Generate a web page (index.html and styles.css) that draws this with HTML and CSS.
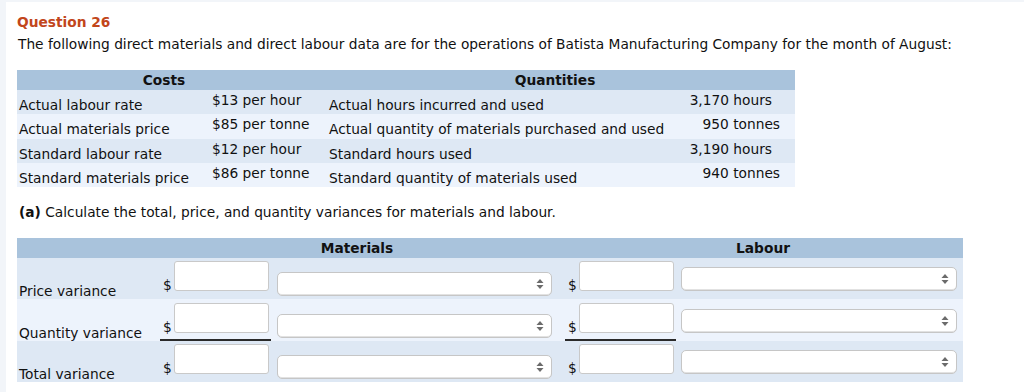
FILE: index.html
```html
<!DOCTYPE html>
<html>
<head>
<meta charset="utf-8">
<link rel="stylesheet" href="styles.css">
</head>
<body>
<div class="panel">
  <h2 class="qtitle">Question 26</h2>
  <p class="intro">The following direct materials and direct labour data are for the operations of Batista Manufacturing Company for the month of August:</p>

  <table class="data">
    <colgroup><col class="c1"><col class="c2"><col class="c3"><col class="c4"></colgroup>
    <tr class="hd"><th colspan="2" class="hcost">Costs</th><th colspan="2" class="hqty">Quantities</th></tr>
    <tr class="dk"><td class="lbl">Actual labour rate</td><td class="val">$13 per hour</td><td class="lbl">Actual hours incurred and used</td><td class="num"><span class="hrs">3,170 hours</span></td></tr>
    <tr class="lt"><td class="lbl">Actual materials price</td><td class="val">$85 per tonne</td><td class="lbl">Actual quantity of materials purchased and used</td><td class="num">950 tonnes</td></tr>
    <tr class="dk"><td class="lbl">Standard labour rate</td><td class="val">$12 per hour</td><td class="lbl">Standard hours used</td><td class="num"><span class="hrs">3,190 hours</span></td></tr>
    <tr class="lt"><td class="lbl">Standard materials price</td><td class="val">$86 per tonne</td><td class="lbl">Standard quantity of materials used</td><td class="num">940 tonnes</td></tr>
  </table>

  <p class="part"><b>(a)</b> Calculate the total, price, and quantity variances for materials and labour.</p>

  <table class="answer">
    <colgroup><col class="a1"><col class="a2"><col class="a3"><col class="a4"><col class="a5"></colgroup>
    <tr class="hd"><th></th><th colspan="2" class="hmat">Materials</th><th colspan="2" class="hlab">Labour</th></tr>
    <tr class="dk">
      <td class="rlbl">Price variance</td>
      <td class="amt"><div class="money m"><span class="dol">$</span><input type="text"></div></td>
      <td class="selm"><div class="sel"><svg width="8" height="12" viewBox="0 0 8 12"><path d="M4 1 L7.5 5 L0.5 5 Z M4 11 L7.5 7 L0.5 7 Z" fill="#6b6b6b"/></svg></div></td>
      <td class="amt"><div class="money l"><span class="dol">$</span><input type="text"></div></td>
      <td class="sell"><div class="sel"><svg width="8" height="12" viewBox="0 0 8 12"><path d="M4 1 L7.5 5 L0.5 5 Z M4 11 L7.5 7 L0.5 7 Z" fill="#6b6b6b"/></svg></div></td>
    </tr>
    <tr class="lt tall">
      <td class="rlbl">Quantity variance</td>
      <td class="amt"><div class="money m under"><span class="dol">$</span><input type="text"></div></td>
      <td class="selm"><div class="sel"><svg width="8" height="12" viewBox="0 0 8 12"><path d="M4 1 L7.5 5 L0.5 5 Z M4 11 L7.5 7 L0.5 7 Z" fill="#6b6b6b"/></svg></div></td>
      <td class="amt"><div class="money l under"><span class="dol">$</span><input type="text"></div></td>
      <td class="sell"><div class="sel"><svg width="8" height="12" viewBox="0 0 8 12"><path d="M4 1 L7.5 5 L0.5 5 Z M4 11 L7.5 7 L0.5 7 Z" fill="#6b6b6b"/></svg></div></td>
    </tr>
    <tr class="dk">
      <td class="rlbl">Total variance</td>
      <td class="amt"><div class="money m"><span class="dol">$</span><input type="text"></div></td>
      <td class="selm"><div class="sel"><svg width="8" height="12" viewBox="0 0 8 12"><path d="M4 1 L7.5 5 L0.5 5 Z M4 11 L7.5 7 L0.5 7 Z" fill="#6b6b6b"/></svg></div></td>
      <td class="amt"><div class="money l"><span class="dol">$</span><input type="text"></div></td>
      <td class="sell"><div class="sel"><svg width="8" height="12" viewBox="0 0 8 12"><path d="M4 1 L7.5 5 L0.5 5 Z M4 11 L7.5 7 L0.5 7 Z" fill="#6b6b6b"/></svg></div></td>
    </tr>
  </table>
</div>
</body>
</html>
```

FILE: styles.css
```css
html, body {
  margin: 0;
  padding: 0;
}
body {
  background: #f2f5f9;
  font-family: "DejaVu Sans", Verdana, sans-serif;
  font-size: 13.75px;
  color: #111;
  height: 392px;
  overflow: hidden;
  padding: 2px 0 0 6px;
  box-sizing: border-box;
}
.panel {
  background: #fff;
  height: 100%;
  padding: 11px 0 0 11px;
  box-sizing: border-box;
}
.qtitle {
  margin: 0;
  font-size: 13.75px;
  font-weight: bold;
  color: #c2461b;
  line-height: 18px;
}
.intro {
  margin: 5px 0 0 1px;
  line-height: 17px;
}
table {
  border-collapse: collapse;
  table-layout: fixed;
}
.hd {
  background: #a9c3dc;
}
.dk {
  background: #dee8f4;
}
.lt {
  background: #edf3fc;
}
.data {
  margin-top: 17px;
  width: 778px;
}
.data .c1 { width: 193px; }
.data .c2 { width: 117px; }
.data .c3 { width: 345px; }
.data .c4 { width: 123px; }
.data tr {
  height: 24.25px;
}
.data tr.hd {
  height: 20px;
}
.data th {
  padding: 0;
  font-weight: bold;
  line-height: 16px;
}
.data th.hcost {
  padding-right: 16px;
}
.data th.hqty {
  padding-right: 12px;
}
.data td {
  padding: 0;
  line-height: 16px;
  vertical-align: top;
  white-space: nowrap;
}
.data td.lbl {
  padding: 7px 0 0 2px;
}
.data td.val {
  padding: 2px 0 0 2px;
}
.data td.num {
  padding: 2px 15px 0 0;
  text-align: right;
}
.data .hrs {
  padding-right: 8px;
}
.part {
  margin: 17px 0 0 2px;
  line-height: 17px;
}
.answer {
  margin-top: 17px;
  width: 946px;
}
.answer .a1 { width: 141px; }
.answer .a2 { width: 116px; }
.answer .a3 { width: 286px; }
.answer .a4 { width: 118px; }
.answer .a5 { width: 285px; }
.answer tr {
  height: 41px;
}
.answer tr.tall {
  height: 42px;
}
.answer tr.hd {
  height: 20px;
}
.answer th {
  padding: 0;
  font-weight: bold;
  line-height: 16px;
}
.answer th.hmat {
  padding-right: 4px;
}
.answer th.hlab {
  padding-left: 3px;
}
.answer td {
  padding: 0;
  vertical-align: bottom;
}
.answer td.rlbl {
  padding-left: 2px;
  line-height: 16px;
  white-space: nowrap;
}
.money {
  display: flex;
  align-items: flex-end;
  width: 108px;
  padding-left: 3px;
  padding-bottom: 6px;
  border-bottom: 2px solid transparent;
}
.money.m {
  margin-left: 2px;
}
.money.l {
  margin-left: 5px;
}
.money.under {
  border-bottom-color: #2a2a2a;
}
.dol {
  line-height: 13px;
  margin-right: 2px;
  margin-bottom: -1px;
}
.money input {
  width: 95px;
  height: 30px;
  box-sizing: border-box;
  border: 1px solid #c9c9c9;
  border-radius: 3px;
  background: #fff;
  margin: 0;
  padding: 0 4px;
  font: inherit;
}
.sel {
  height: 24px;
  box-sizing: border-box;
  border: 1px solid #c6c6c6;
  border-radius: 5px;
  background: #fff;
  box-shadow: inset 0 -1px 0 #e2e2e2;
  display: flex;
  align-items: center;
  justify-content: flex-end;
  padding-right: 7px;
}
.selm .sel {
  margin-left: 3px;
  width: 275px;
  margin-bottom: 3px;
}
.sell .sel {
  margin-left: 3px;
  width: 276px;
  margin-bottom: 8px;
}
```
